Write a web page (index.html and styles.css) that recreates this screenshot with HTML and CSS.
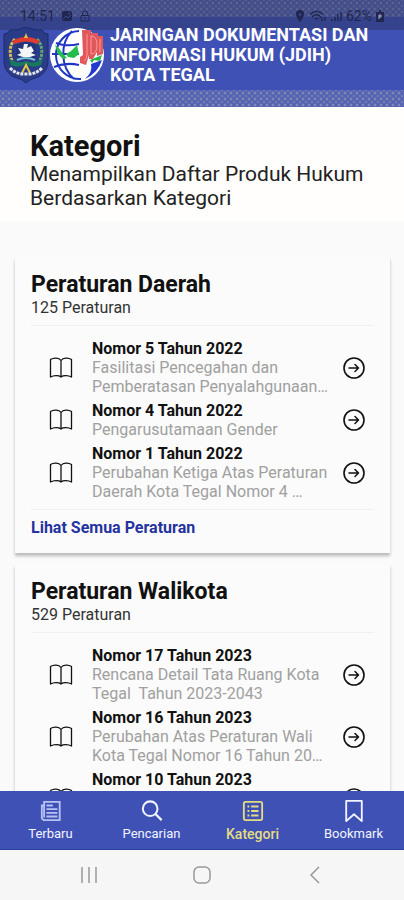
FILE: index.html
```html
<!DOCTYPE html>
<html lang="id">
<head>
<meta charset="UTF-8">
<meta name="viewport" content="width=device-width, initial-scale=1.0">
<title>JDIH Kota Tegal</title>
<link rel="stylesheet" href="styles.css">
</head>
<body>
<!-- shared icons -->
<svg class="sprite" aria-hidden="true">
  <symbol id="book" viewBox="0 0 24 24">
    <path d="M12 4.500C10 1.500 4.500 1.500 1.500 3.500V21C4.500 19.500 9.500 19 12 21C14.500 19 19.500 19.500 22.500 21V3.500C19.500 1.500 14 1.500 12 4.500ZM12 4.500V21" fill="none" stroke="currentColor" stroke-width="1.300" stroke-linejoin="round"/>
  </symbol>
  <symbol id="arrow" viewBox="0 0 24 24">
    <circle cx="12" cy="12" r="10" fill="none" stroke="currentColor" stroke-width="1.600"/>
    <path d="M7 12H16.500M13 8.500L16.500 12L13 15.500" fill="none" stroke="currentColor" stroke-width="1.500" stroke-linecap="round" stroke-linejoin="round"/>
  </symbol>
</svg>

<header class="header">
  <div class="status">
    <span class="status-time">14:51</span>
    <svg width="12" height="12" viewBox="0 0 12 12"><rect x="1" y="1" width="10" height="10" rx="2" fill="currentColor"/><path d="M2 9L5 6L7 8L10 5" fill="none" stroke="#3b478f"/><circle cx="8" cy="3.500" r="1" fill="#3b478f"/></svg>
    <svg width="12" height="12" viewBox="0 0 12 12"><path d="M3.500 5V3.500a2.500 2.500 0 0 1 5 0V5M2 5.500h8v5.500H2z" fill="none" stroke="currentColor"/><path d="M6 7v2" stroke="currentColor"/></svg>
    <span class="status-right">
      <svg width="10" height="12" viewBox="0 0 10 12"><path d="M5 0a4 4 0 0 1 4 4.500C9 7 5 12 5 12S1 7 1 4.500A4 4 0 0 1 5 0z" fill="currentColor"/><circle cx="5" cy="4.500" r="1.300" fill="#3b478f"/></svg>
      <svg width="17" height="12" viewBox="0 0 17 12"><path d="M1 4.500C5 0.500 10 0.500 14 4.500M3 7C6 4 9 4 12 7M5.500 9C7 8 8 8 9.500 9M13 7v4M16 11V7" fill="none" stroke="currentColor" stroke-width="1.300"/></svg>
      <svg width="12" height="12" viewBox="0 0 12 12"><path d="M2 11V9M5 11V7M8 11V4M11 11V2" stroke="currentColor" stroke-width="1.400"/></svg>
      <span>62%</span>
      <svg width="8" height="12" viewBox="0 0 8 12"><path d="M3 0h2v2h3v10H0V2h3z" fill="currentColor"/><path d="M3 9V5h2v2H3" fill="none" stroke="#aab0d8"/></svg>
    </span>
  </div>
  <div class="brand">
    <svg class="crest" viewBox="0 0 46 56" role="img" aria-label="Kota Tegal">
      <path d="M1 7Q5 7 7 3Q15 4 23 0Q31 4 39 3Q41 7 45 7V34C45 42 40 49 32 51Q27 52 23 56Q19 52 14 51C6 49 1 42 1 34Z" fill="#2a3c88" stroke="#1d2c6c"/>
      <path d="M12 12C6 18 6 28 10 36" fill="none" stroke="#d7bd52" stroke-width="3" stroke-dasharray="3 1"/>
      <path d="M34 12C40 18 40 28 36 36" fill="none" stroke="#5fa574" stroke-width="3" stroke-dasharray="3 1"/>
      <path d="M9 14Q23 6 37 14L34 17Q23 12 12 17Z" fill="#e23b32"/>
      <path d="M23 6L25 11H21Z" fill="#e9c440"/>
      <path d="M13 18Q23 13 33 18V30Q23 36 13 30Z" fill="#22357a"/>
      <path d="M14 28L18 26L15 21L20 22L21 17L25 17L24 21L28 19L31 24L28 26L33 28L27 30L20 30Z" fill="#f3f5f7"/>
      <path d="M6 31Q14 38 23 34Q32 38 40 31L38 38Q30 42 23 37Q15 42 8 38Z" fill="#19795d"/>
      <path d="M14 33Q23 29 32 33" fill="none" stroke="#75c2d0" stroke-width="2"/>
      <path d="M19 46L23 38L27 46" fill="none" stroke="#e1c64a" stroke-width="2"/>
      <path d="M7 41Q14 48 23 47Q32 48 39 41" fill="none" stroke="#e3e5e8" stroke-width="3" stroke-dasharray="3 1"/>
    </svg>
    <svg class="globe" viewBox="0 0 56 56" role="img" aria-label="JDIH">
      <circle cx="28" cy="28" r="27" fill="#fff"/>
      <path d="M30 4A24 24 0 1 0 32 52M23 4C11 16 11 40 25 52M7 16Q17 20 30 17M5 40Q17 35 30 38M3 27H30" fill="none" stroke="#2036c4" stroke-width="2"/>
      <path d="M6 18L10 21L14 27L18 31L14 32L9 27ZM17 27L22 24L28 18L30 27L25 31L19 30Z" fill="#25bd4b"/>
      <path d="M42 37L53 33Q49 46 36 52Q44 45 42 37Z" fill="#2438d2"/>
      <path d="M41 33L53 28L51 34L45 33L43 36Z" fill="#25b648"/>
      <path d="M33 3H42V6H49V9H54V27L48 29V25L44 32H40V28L37 38L31 36V30L34 28Z" fill="#e0575c"/>
      <path d="M38 7V28Q38 32 35 34M42 9V27Q48 27 48 18Q48 9 42 9M51 12V25" fill="none" stroke="#ff9a95" stroke-width="1"/>
    </svg>
    <div class="brand-name">JARINGAN DOKUMENTASI DAN<br>INFORMASI HUKUM (JDIH)<br>KOTA TEGAL</div>
  </div>
</header>

<main class="content">
  <section class="intro">
    <h1>Kategori</h1>
    <p>Menampilkan Daftar Produk Hukum Berdasarkan Kategori</p>
  </section>

  <section class="card">
    <h2>Peraturan Daerah</h2>
    <p class="count">125 Peraturan</p>
    <ul class="list">
      <li class="item">
        <svg class="icon"><use href="#book"/></svg>
        <div class="item-text">
          <h3>Nomor 5 Tahun 2022</h3>
          <p>Fasilitasi Pencegahan dan<br>Pemberatasan Penyalahgunaan…</p>
        </div>
        <button class="open" aria-label="Buka Nomor 5 Tahun 2022"><svg class="icon"><use href="#arrow"/></svg></button>
      </li>
      <li class="item">
        <svg class="icon"><use href="#book"/></svg>
        <div class="item-text">
          <h3>Nomor 4 Tahun 2022</h3>
          <p>Pengarusutamaan Gender</p>
        </div>
        <button class="open" aria-label="Buka Nomor 4 Tahun 2022"><svg class="icon"><use href="#arrow"/></svg></button>
      </li>
      <li class="item">
        <svg class="icon"><use href="#book"/></svg>
        <div class="item-text">
          <h3>Nomor 1 Tahun 2022</h3>
          <p>Perubahan Ketiga Atas Peraturan<br>Daerah Kota Tegal Nomor 4 …</p>
        </div>
        <button class="open" aria-label="Buka Nomor 1 Tahun 2022"><svg class="icon"><use href="#arrow"/></svg></button>
      </li>
    </ul>
    <a class="more" href="#">Lihat Semua Peraturan</a>
  </section>

  <section class="card">
    <h2>Peraturan Walikota</h2>
    <p class="count">529 Peraturan</p>
    <ul class="list">
      <li class="item">
        <svg class="icon"><use href="#book"/></svg>
        <div class="item-text">
          <h3>Nomor 17 Tahun 2023</h3>
          <p>Rencana Detail Tata Ruang Kota<br>Tegal&nbsp; Tahun 2023-2043</p>
        </div>
        <button class="open" aria-label="Buka Nomor 17 Tahun 2023"><svg class="icon"><use href="#arrow"/></svg></button>
      </li>
      <li class="item">
        <svg class="icon"><use href="#book"/></svg>
        <div class="item-text">
          <h3>Nomor 16 Tahun 2023</h3>
          <p>Perubahan Atas Peraturan Wali<br>Kota Tegal Nomor 16 Tahun 20…</p>
        </div>
        <button class="open" aria-label="Buka Nomor 16 Tahun 2023"><svg class="icon"><use href="#arrow"/></svg></button>
      </li>
      <li class="item item-last">
        <svg class="icon"><use href="#book"/></svg>
        <div class="item-text">
          <h3>Nomor 10 Tahun 2023</h3>
        </div>
        <button class="open" aria-label="Buka Nomor 10 Tahun 2023"><svg class="icon"><use href="#arrow"/></svg></button>
      </li>
    </ul>
  </section>
</main>

<nav class="tabs">
  <a class="tab" href="#">
    <svg class="tab-icon tab-news" viewBox="0 0 24 24"><path d="M4.500 2H21.500V22H4L2 20V6H4.500ZM4.500 6V19" fill="none" stroke="currentColor" stroke-width="2"/><path d="M7 6H14M7 10H19M7 14H19M7 18H19" stroke="currentColor" stroke-width="2"/></svg>
    Terbaru
  </a>
  <a class="tab" href="#">
    <svg class="tab-icon" viewBox="0 0 24 24"><circle cx="10" cy="9.500" r="8" fill="none" stroke="currentColor" stroke-width="2.200"/><path d="M15.500 15L22.500 22" stroke="currentColor" stroke-width="2.500"/></svg>
    Pencarian
  </a>
  <a class="tab active" href="#">
    <svg class="tab-icon" viewBox="0 0 24 24"><rect x="2" y="2" width="20" height="20" rx="2" fill="none" stroke="currentColor" stroke-width="2"/><path d="M6 7H8M10 7H18M6 12H8M10 12H18M6 17H8M10 17H18" stroke="currentColor" stroke-width="2.200"/></svg>
    Kategori
  </a>
  <a class="tab" href="#">
    <svg class="tab-icon" viewBox="0 0 24 24"><path d="M3.500 1H20.500V23L12 15.500L3.500 23Z" fill="none" stroke="currentColor" stroke-width="2" stroke-linejoin="round"/></svg>
    Bookmark
  </a>
</nav>

<div class="system-nav">
  <button aria-label="Recents"><svg width="18" height="18" viewBox="0 0 18 18"><path d="M2 1V17M9 1V17M16 1V17" stroke="currentColor" stroke-width="1.500"/></svg></button>
  <button aria-label="Home"><svg width="18" height="18" viewBox="0 0 18 18"><rect x="1" y="1" width="16" height="16" rx="5" fill="none" stroke="currentColor" stroke-width="1.500"/></svg></button>
  <button aria-label="Back"><svg width="18" height="18" viewBox="0 0 18 18"><path d="M13 1L5 9L13 17" fill="none" stroke="currentColor" stroke-width="1.500"/></svg></button>
</div>
</body>
</html>
```
FILE: styles.css
```css
* {
  box-sizing: border-box;
}
body {
  margin: 0;
  height: 100vh;
  display: flex;
  flex-direction: column;
  font-family: Roboto, sans-serif;
  background-color: #fafafa;
  color: #111;
}
h1, h2, h3, p, ul {
  margin: 0;
  padding: 0;
}
button {
  padding: 0;
  border: 0;
  background: none;
  color: inherit;
  cursor: pointer;
}
svg {
  display: block;
  flex-shrink: 0;
}
.sprite {
  position: absolute;
  width: 0;
  height: 0;
}

/* header */
.header {
  position: relative;
  flex-shrink: 0;
  padding: 24px 0 22px;
  background-color: #3f51b5;
}
.header::before,
.header::after {
  content: "";
  position: absolute;
  left: 0;
  right: 0;
  height: 17px;
  background-color: #5160b2;
  background-image:
    radial-gradient(circle, #7d84b6 1px, transparent 2px),
    radial-gradient(circle, #7078b4 1px, transparent 2px);
  background-size: 6px 6px;
  background-position: 0 0, 3px 3px;
}
.header::before {
  top: 0;
}
.header::after {
  bottom: 0;
}
.status {
  position: absolute;
  z-index: 1;
  top: 0;
  left: 0;
  right: 0;
  height: 30px;
  padding: 2px 20px 0;
  display: flex;
  align-items: center;
  gap: 6px;
  background-color: rgba(40, 45, 80, 0.4);
  color: #20264f;
  font-size: 14px;
}
.status-right {
  margin-left: auto;
  display: flex;
  align-items: center;
  gap: 4px;
}
.brand {
  position: relative;
  z-index: 2;
  display: flex;
  align-items: center;
  padding: 1px 0 0 3px;
}
.crest {
  width: 46px;
  height: 56px;
}
.globe {
  width: 56px;
  height: 56px;
  margin-right: 5px;
}
.brand-name {
  color: #fff;
  font-size: 18px;
  font-weight: 700;
  line-height: 20px;
  white-space: nowrap;
}

/* page content */
.content {
  flex: 1;
  min-height: 0;
  overflow: hidden;
}
.intro {
  margin-bottom: 36px;
  padding: 23px 30px 11px;
  background-color: #fffefc;
}
.intro h1 {
  font-size: 29px;
  font-weight: 700;
  line-height: 32px;
}
.intro p {
  color: #222;
  font-size: 21px;
  line-height: 24px;
}
.card {
  margin: 0 14px 11px 15px;
  padding: 15px 16px 16px;
  background-color: #fbfbfb;
  box-shadow: 0 3px 3px rgba(0, 0, 0, 0.25);
}
.card h2 {
  font-size: 23px;
  font-weight: 700;
  line-height: 26px;
}
.count {
  color: #333;
  font-size: 16px;
  line-height: 20px;
}
.list {
  margin-top: 7px;
  padding: 13px 8px 3px 18px;
  border-top: 1px solid #f0f0f0;
  border-bottom: 1px solid #f0f0f0;
  list-style: none;
}
.item {
  display: flex;
  align-items: center;
  margin-bottom: 5px;
}
.icon {
  width: 24px;
  height: 24px;
}
.item-text {
  flex: 1;
  min-width: 0;
  padding-left: 19px;
  white-space: nowrap;
}
.item h3 {
  font-size: 16px;
  font-weight: 700;
  line-height: 19px;
}
.item p {
  color: #a0a0a0;
  font-size: 16px;
  line-height: 19px;
}
.item-last {
  min-height: 57px;
}
.item-last .item-text {
  align-self: flex-start;
}
.more {
  display: block;
  padding-top: 8px;
  color: #2533a0;
  font-size: 16px;
  font-weight: 700;
  line-height: 19px;
  text-decoration: none;
}

/* bottom tabs */
.tabs {
  flex-shrink: 0;
  display: flex;
  height: 59px;
  background-color: #3f51b5;
  border-bottom: 1px solid #2c3f9d;
}
.tab {
  flex: 1;
  display: flex;
  flex-direction: column;
  align-items: center;
  gap: 4px;
  padding-top: 9px;
  color: #f2f4ff;
  font-size: 13px;
  line-height: 16px;
  text-decoration: none;
}
.tab-icon {
  width: 24px;
  height: 22px;
}
.tab-news {
  color: #b7c2f3;
}
.tab.active {
  color: #e5dc82;
  font-size: 14px;
  font-weight: 500;
}
.system-nav {
  flex-shrink: 0;
  display: flex;
  justify-content: center;
  gap: 95px;
  height: 50px;
  background-color: #f6f6f6;
  color: #999;
}
```
